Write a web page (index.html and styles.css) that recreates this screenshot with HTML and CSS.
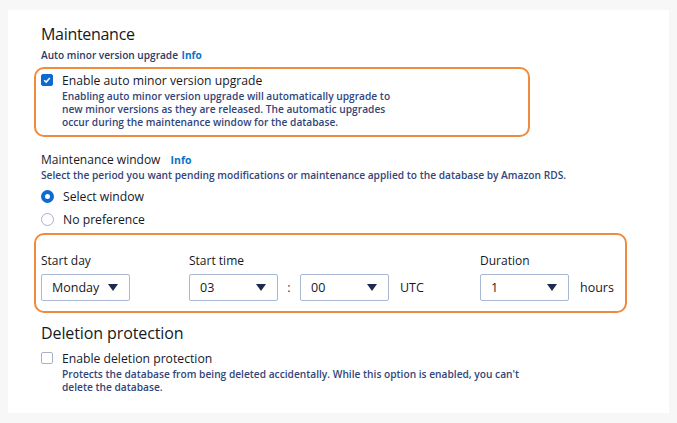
FILE: index.html
```html
<!DOCTYPE html>
<html>
<head>
<meta charset="utf-8">
<link rel="stylesheet" href="styles.css">
</head>
<body>
<div class="card">
  <h2 class="h">Maintenance</h2>
  <div class="label sm">Auto minor version upgrade <span class="info">Info</span></div>
  <div class="hl hl1">
    <div class="check-row">
      <span class="cb on"><svg viewBox="0 0 12 12" width="12" height="12"><path d="M2.6 6.2 L5 8.5 L9.4 3.6" fill="none" stroke="#fff" stroke-width="1.8"/></svg></span>
      <div>
        <div class="opt">Enable auto minor version upgrade</div>
        <div class="desc">Enabling auto minor version upgrade will automatically upgrade to<br>new minor versions as they are released. The automatic upgrades<br>occur during the maintenance window for the database.</div>
      </div>
    </div>
  </div>
  <div class="label mw">Maintenance window <span class="info">Info</span></div>
  <div class="desc">Select the period you want pending modifications or maintenance applied to the database by Amazon RDS.</div>
  <div class="radio-row r1"><span class="rb on"></span><span class="opt">Select window</span></div>
  <div class="radio-row r2"><span class="rb"></span><span class="opt">No preference</span></div>
  <div class="hl hl2">
    <div class="field f-day">
      <div class="flabel">Start day</div>
      <div class="sel s-day"><span>Monday</span><span class="tri"></span></div>
    </div>
    <div class="field f-time">
      <div class="flabel">Start time</div>
      <div class="time-row">
        <div class="sel s-time"><span>03</span><span class="tri"></span></div>
        <span class="colon">:</span>
        <div class="sel s-time"><span>00</span><span class="tri"></span></div>
        <span class="unit">UTC</span>
      </div>
    </div>
    <div class="field f-dur">
      <div class="flabel">Duration</div>
      <div class="time-row">
        <div class="sel s-time"><span>1</span><span class="tri"></span></div>
        <span class="unit">hours</span>
      </div>
    </div>
  </div>
  <h2 class="h h-del">Deletion protection</h2>
  <div class="check-row del">
    <span class="cb"></span>
    <div>
      <div class="opt">Enable deletion protection</div>
      <div class="desc">Protects the database from being deleted accidentally. While this option is enabled, you can't<br>delete the database.</div>
    </div>
  </div>
</div>
</body>
</html>
```
FILE: styles.css
```css
* { box-sizing: border-box; }
html, body { margin: 0; padding: 0; }
body {
  background: #f7f7f7;
  font-family: "Open Sans", "Noto Sans", sans-serif;
  color: #16191f;
  width: 677px;
  height: 423px;
  overflow: hidden;
}
.card {
  margin: 10px 8px 0 8px;
  width: 661px;
  height: 403px;
  background: #fff;
  padding: 13px 0 0 33px;
}
.h {
  margin: 0;
  font-size: 16px;
  letter-spacing: -0.3px;
  font-weight: 500;
  line-height: 22px;
  color: #16191f;
}
.label {
  font-size: 10.1px;
  font-weight: 600;
  color: #2a3a66;
  line-height: 14px;
}
.sm { margin-top: 3px; }
.info { color: #0a73c9; font-weight: 700; margin-left: 1px; }
.hl {
  border: 2px solid #f08a3c;
  border-radius: 10px;
  margin-left: -7px;
}
.hl1 {
  width: 496px;
  height: 70px;
  margin-top: 5px;
  padding: 2px 0 0 5px;
}
.check-row { display: flex; gap: 9px; }
.cb {
  flex: none;
  width: 12px;
  height: 12px;
  margin-top: 3px;
  border: 1.5px solid #a7b3c4;
  border-radius: 2px;
  display: flex;
  align-items: center;
  justify-content: center;
}
.cb.on { background: #0b6bd3; border-color: #0b6bd3; }
.opt {
  font-size: 12.2px;
  font-weight: 500;
  line-height: 19px;
  color: #16191f;
}
.desc {
  font-size: 10.2px;
  font-weight: 600;
  line-height: 13px;
  color: #33457a;
}
.mw { margin-top: 16px; font-size: 12px; font-weight: 500; color: #16191f; }
.mw .info { margin-left: 7px; font-size: 10.5px; }
.mw + .desc { margin-top: 2px; }
.radio-row { display: flex; align-items: center; gap: 9px; height: 23px; }
.r1 { margin-top: 3px; }
.rb {
  width: 13px; height: 13px; border-radius: 50%;
  border: 1.5px solid #a7b3c4;
  flex: none;
}
.rb.on { border: 4px solid #0b6bd3; }
.hl2 {
  width: 593px;
  height: 80px;
  margin-top: 2px;
  padding: 18px 0 0 5px;
  display: flex;
}
.flabel {
  font-size: 12px;
  font-weight: 500;
  line-height: 16px;
  margin-bottom: 5px;
  color: #16191f;
}
.f-day { width: 148px; }
.f-time { width: 291px; }
.time-row { display: flex; align-items: center; }
.sel {
  height: 27px;
  border: 1px solid #a9b9d3;
  border-radius: 2px;
  display: flex;
  align-items: center;
  justify-content: space-between;
  font-size: 12.5px;
  font-weight: 500;
  color: #16191f;
}
.s-day { width: 89px; padding: 0 11px 0 10px; }
.s-time { width: 89px; padding: 0 11px 0 10px; }
.tri {
  width: 0; height: 0;
  border-left: 5px solid transparent;
  border-right: 5px solid transparent;
  border-top: 7px solid #1b2a4e;
}
.colon { width: 22px; text-align: center; font-size: 12.5px; color: #444; }
.unit { margin-left: 11px; font-size: 12.5px; font-weight: 500; }
.h-del { margin-top: 9px; letter-spacing: -0.1px; }
.del { margin-top: 5px; }
```
